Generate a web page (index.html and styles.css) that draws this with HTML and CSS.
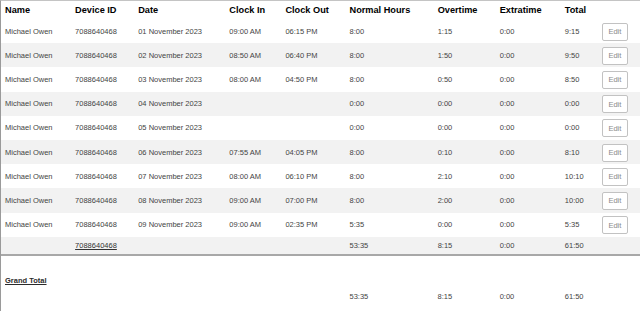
FILE: index.html
```html
<!DOCTYPE html>
<html>
<head>
<meta charset="utf-8">
<link rel="stylesheet" href="styles.css">
</head>
<body>
<div class="panel">
  <table class="grid">
    <colgroup>
      <col class="c-name"><col class="c-dev"><col class="c-date"><col class="c-in"><col class="c-out">
      <col class="c-norm"><col class="c-over"><col class="c-extra"><col class="c-total"><col class="c-edit">
    </colgroup>
    <thead>
      <tr class="head">
        <th>Name</th><th>Device ID</th><th>Date</th><th>Clock In</th><th>Clock Out</th>
        <th>Normal Hours</th><th>Overtime</th><th>Extratime</th><th>Total</th><th></th>
      </tr>
    </thead>
    <tbody>
      <tr class="row"><td>Michael Owen</td><td>7088640468</td><td>01 November 2023</td><td>09:00 AM</td><td>06:15 PM</td><td>8:00</td><td>1:15</td><td>0:00</td><td>9:15</td><td><button class="edit">Edit</button></td></tr>
      <tr class="row alt"><td>Michael Owen</td><td>7088640468</td><td>02 November 2023</td><td>08:50 AM</td><td>06:40 PM</td><td>8:00</td><td>1:50</td><td>0:00</td><td>9:50</td><td><button class="edit">Edit</button></td></tr>
      <tr class="row"><td>Michael Owen</td><td>7088640468</td><td>03 November 2023</td><td>08:00 AM</td><td>04:50 PM</td><td>8:00</td><td>0:50</td><td>0:00</td><td>8:50</td><td><button class="edit">Edit</button></td></tr>
      <tr class="row alt"><td>Michael Owen</td><td>7088640468</td><td>04 November 2023</td><td></td><td></td><td>0:00</td><td>0:00</td><td>0:00</td><td>0:00</td><td><button class="edit">Edit</button></td></tr>
      <tr class="row"><td>Michael Owen</td><td>7088640468</td><td>05 November 2023</td><td></td><td></td><td>0:00</td><td>0:00</td><td>0:00</td><td>0:00</td><td><button class="edit">Edit</button></td></tr>
      <tr class="row alt"><td>Michael Owen</td><td>7088640468</td><td>06 November 2023</td><td>07:55 AM</td><td>04:05 PM</td><td>8:00</td><td>0:10</td><td>0:00</td><td>8:10</td><td><button class="edit">Edit</button></td></tr>
      <tr class="row"><td>Michael Owen</td><td>7088640468</td><td>07 November 2023</td><td>08:00 AM</td><td>06:10 PM</td><td>8:00</td><td>2:10</td><td>0:00</td><td>10:10</td><td><button class="edit">Edit</button></td></tr>
      <tr class="row alt"><td>Michael Owen</td><td>7088640468</td><td>08 November 2023</td><td>09:00 AM</td><td>07:00 PM</td><td>8:00</td><td>2:00</td><td>0:00</td><td>10:00</td><td><button class="edit">Edit</button></td></tr>
      <tr class="row"><td>Michael Owen</td><td>7088640468</td><td>09 November 2023</td><td>09:00 AM</td><td>02:35 PM</td><td>5:35</td><td>0:00</td><td>0:00</td><td>5:35</td><td><button class="edit">Edit</button></td></tr>
      <tr class="subtotal"><td></td><td><a class="link">7088640468</a></td><td></td><td></td><td></td><td>53:35</td><td>8:15</td><td>0:00</td><td>61:50</td><td></td></tr>
    </tbody>
  </table>
  <table class="grid grand">
    <colgroup>
      <col class="c-name"><col class="c-dev"><col class="c-date"><col class="c-in"><col class="c-out">
      <col class="c-norm"><col class="c-over"><col class="c-extra"><col class="c-total"><col class="c-edit">
    </colgroup>
    <tbody>
      <tr class="grand-label"><td colspan="10"><a class="link strong">Grand Total</a></td></tr>
      <tr class="grand-values"><td></td><td></td><td></td><td></td><td></td><td>53:35</td><td>8:15</td><td>0:00</td><td>61:50</td><td></td></tr>
    </tbody>
  </table>
</div>
</body>
</html>
```

FILE: styles.css
```css
html, body {
  margin: 0;
  padding: 0;
  background: #fff;
}

body {
  font-family: "Liberation Sans", Arial, sans-serif;
  color: #444;
}

.panel {
  border-left: 1px solid #9a9a9a;
  border-top: 1px solid #c4c4c4;
  height: 310px;
}

.grid {
  width: 639px;
  border-collapse: collapse;
  table-layout: fixed;
}

.c-name { width: 70px; }
.c-dev { width: 63px; }
.c-date { width: 91px; }
.c-in { width: 56px; }
.c-out { width: 64px; }
.c-norm { width: 88px; }
.c-over { width: 62px; }
.c-extra { width: 65px; }
.c-total { width: 37px; }
.c-edit { width: 42px; }

.head th {
  height: 18px;
  padding: 0 0 0 4px;
  text-align: left;
  font-size: 9.2px;
  line-height: 11px;
  font-weight: bold;
  color: #000;
  white-space: nowrap;
  vertical-align: middle;
}

.row td,
.subtotal td,
.grand td {
  padding: 0 0 0 4px;
  font-size: 7.5px;
  line-height: 9px;
  white-space: nowrap;
  vertical-align: middle;
}

.row td {
  height: 24.2px;
}

.alt td {
  background: #f2f2f2;
}

.edit {
  display: block;
  margin: 1px 0 0 0;
  width: 26px;
  height: 18px;
  padding: 0;
  border: 1px solid #c2c2c2;
  border-radius: 2px;
  background: #fff;
  font-family: "Liberation Sans", Arial, sans-serif;
  font-size: 7.5px;
  color: #8a8a8a;
  cursor: pointer;
}

.subtotal td {
  height: 17px;
  background: #f2f2f2;
  border-bottom: 2px solid #a8a8a8;
}

.link {
  color: #333;
  text-decoration: underline;
}

.strong {
  font-weight: bold;
  color: #2b2b2b;
}

.grand-label td {
  padding-top: 20px;
  padding-bottom: 3px;
}

.grand-values td {
  padding-top: 4px;
}
```
